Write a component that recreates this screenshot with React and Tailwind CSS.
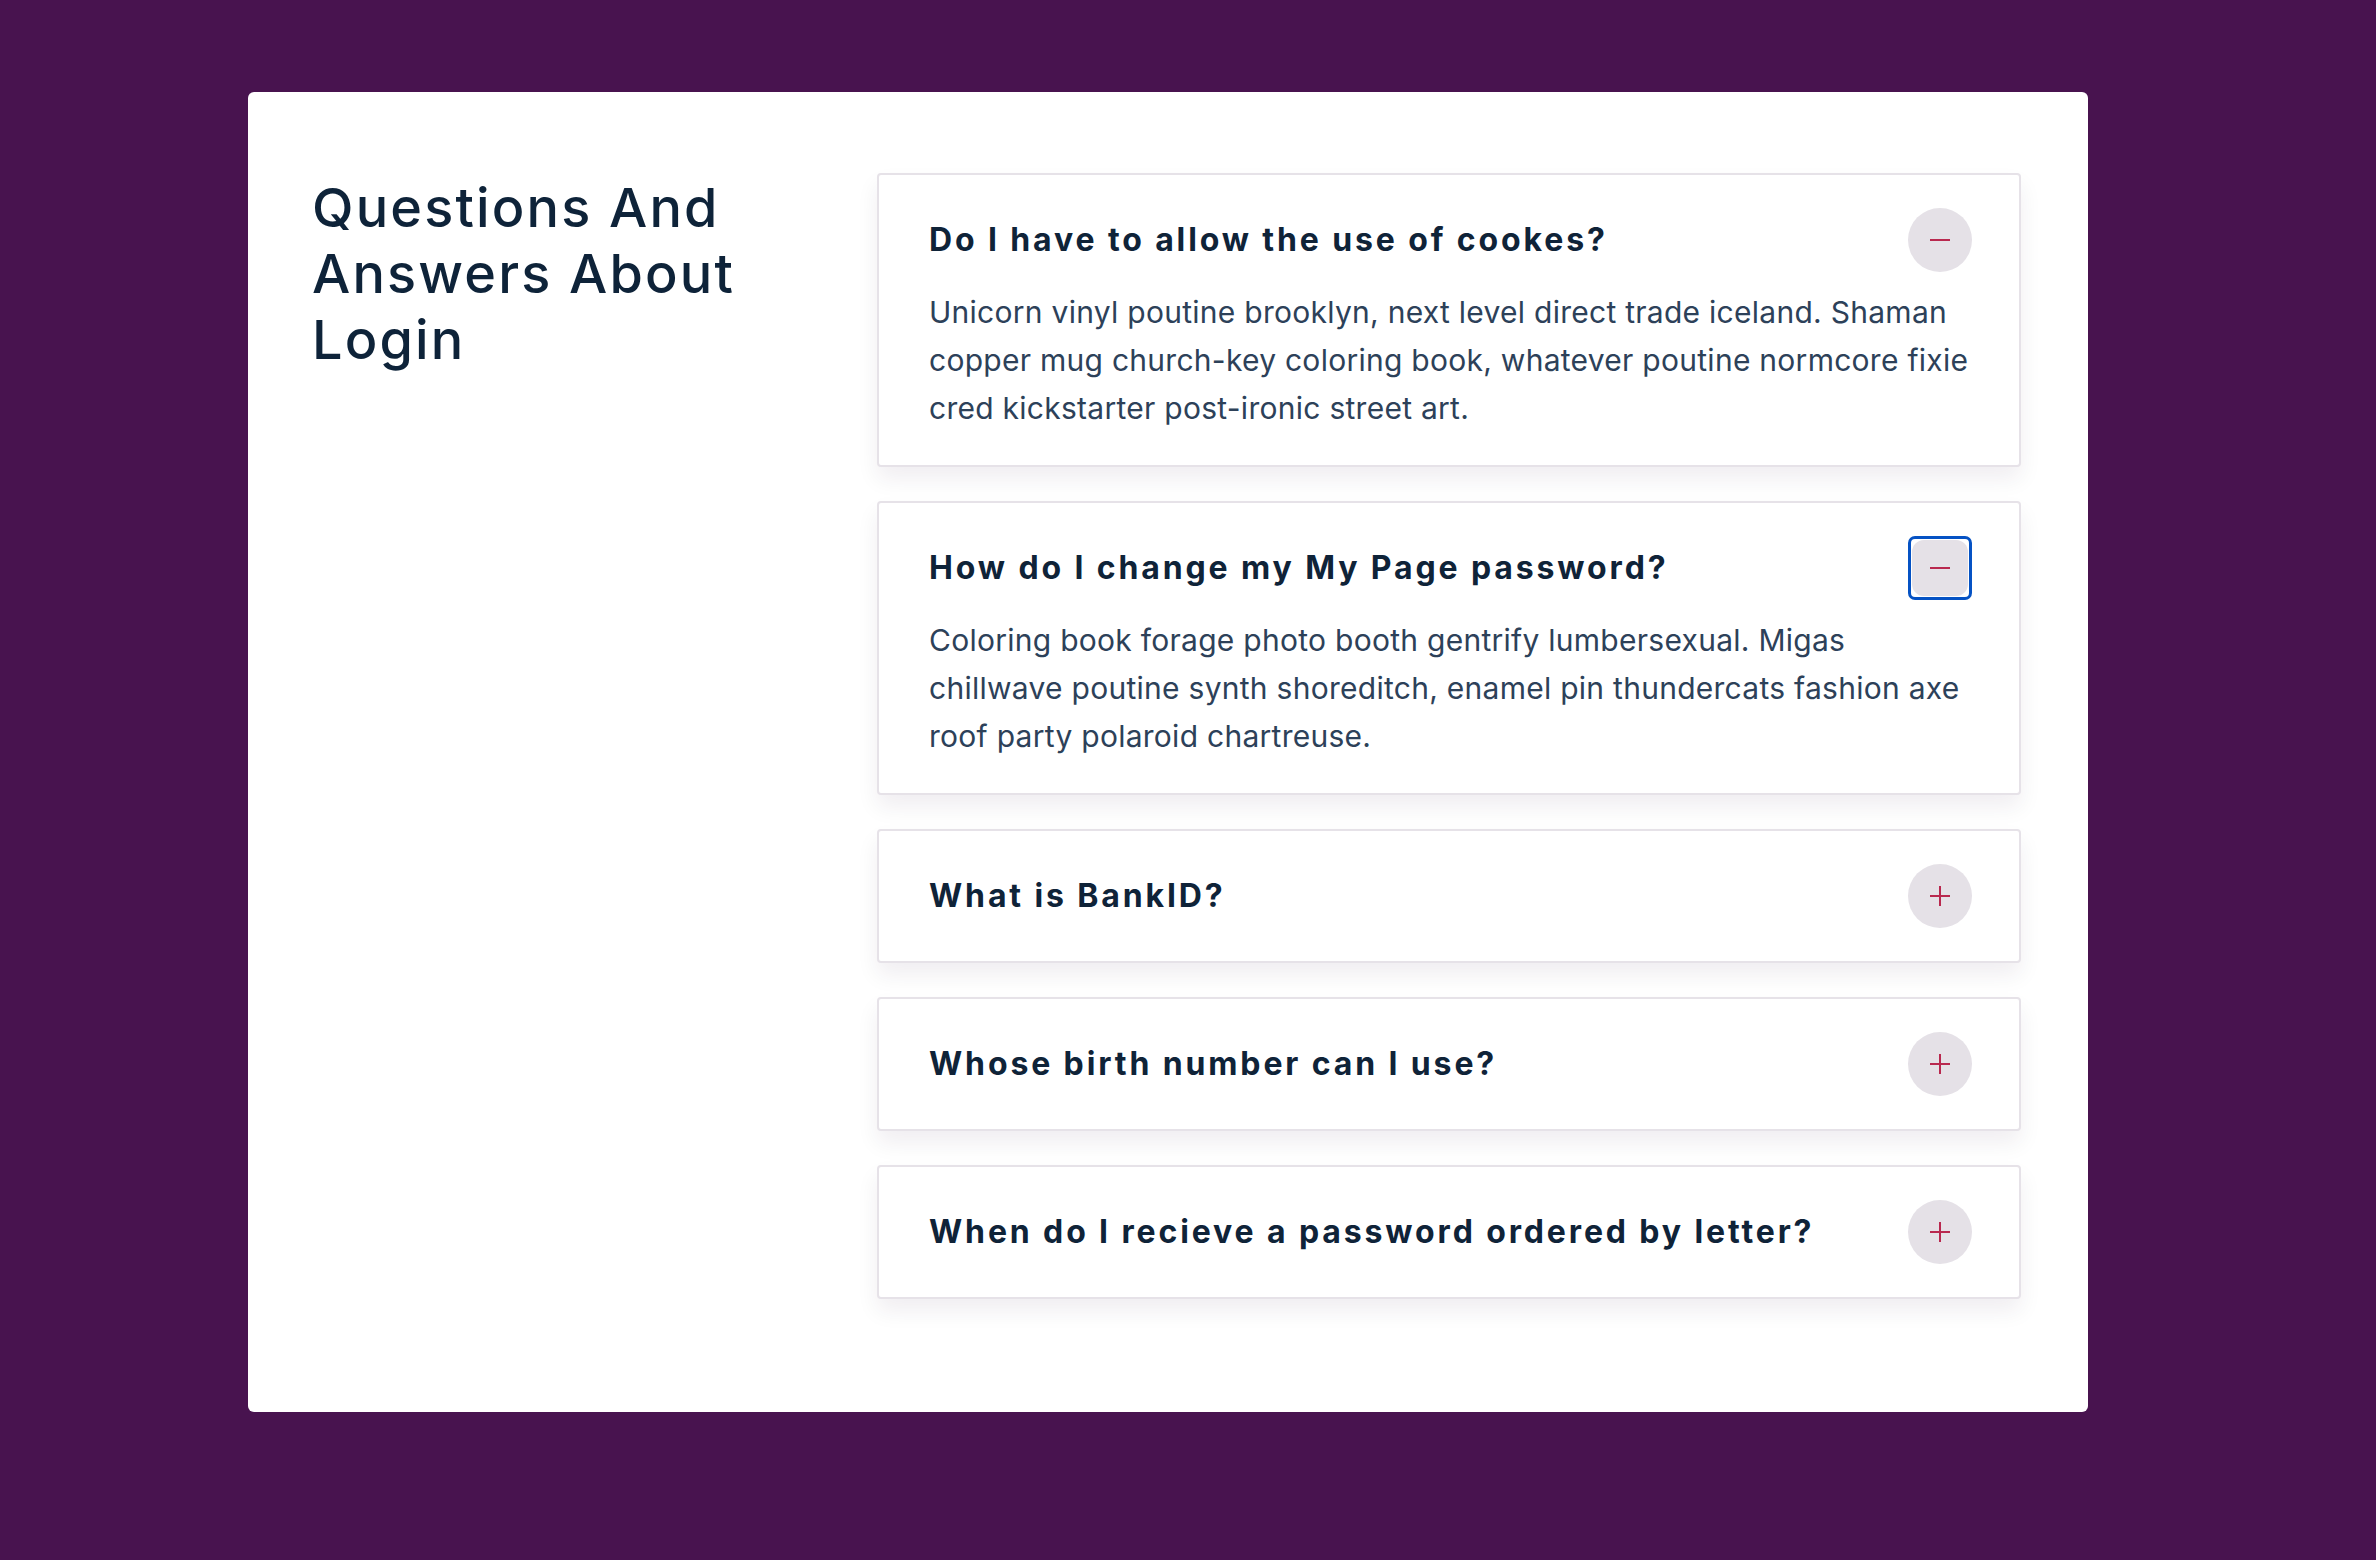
import React, { useState } from "react";

const faqs = [
  {
    q: "Do I have to allow the use of cookes?",
    a: "Unicorn vinyl poutine brooklyn, next level direct trade iceland. Shaman copper mug church-key coloring book, whatever poutine normcore fixie cred kickstarter post-ironic street art.",
  },
  {
    q: "How do I change my My Page password?",
    a: "Coloring book forage photo booth gentrify lumbersexual. Migas chillwave poutine synth shoreditch, enamel pin thundercats fashion axe roof party polaroid chartreuse.",
  },
  {
    q: "What is BankID?",
    a: "Keytar cray slow-carb, Godard banh mi salvia pour-over. Slow-carb Odd Future seitan normcore. Master cleanse american apparel.",
  },
  {
    q: "Whose birth number can I use?",
    a: "Digital nomad kitsch flexitarian, fixie put a bird on it vinyl single-origin coffee.",
  },
  {
    q: "When do I recieve a password ordered by letter?",
    a: "Pitchfork sustainable tofu synth chambray yr, lo-fi disrupt vice tumblr.",
  },
];

const Toggle = ({ open, focused }) => (
  <button
    className={`relative shrink-0 size-[64px] flex items-center justify-center ${
      focused
        ? "rounded-[7px] border-[3px] border-[#0552c4] p-0"
        : "rounded-full"
    }`}
  >
    <span
      className={`absolute inset-0 bg-[#e5e1e7] ${
        focused ? "rounded-[12px] m-[1px]" : "rounded-full"
      }`}
    />
    <span className="relative block w-[20px] h-[2px] bg-[#b9284f]" />
    {!open && (
      <span className="absolute block w-[2px] h-[20px] bg-[#b9284f]" />
    )}
  </button>
);

export default function App() {
  const [openItems] = useState([0, 1]);

  return (
    <div
      className="min-h-screen bg-[#48134f] pt-[92px] pl-[248px]"
      style={{ fontFamily: "Inter, 'Noto Sans', sans-serif" }}
    >
      <div className="w-[1840px] bg-white rounded-[6px] flex pt-[81px] pb-[113px] pl-[64px] pr-[67px]">
        <div className="w-[565px] shrink-0">
          <h2 className="mt-[2px] text-[54px] leading-[66px] font-medium tracking-[0.04em] text-[#0e2339] w-[440px]">
            Questions And Answers About Login
          </h2>
        </div>

        <div className="flex-1 flex flex-col gap-[34px]">
          {faqs.map((item, i) => {
            const open = openItems.includes(i);
            return (
              <div
                key={item.q}
                className="bg-white border-2 border-[#e6e2e8] rounded-[4px] pl-[50px] pr-[47px] py-[33px] shadow-[0_12px_22px_rgba(40,20,50,0.07)]"
              >
                <div className="flex items-center justify-between gap-6">
                  <h3 className="text-[32px] font-bold tracking-[0.09em] text-[#0f2338]">
                    {item.q}
                  </h3>
                  <Toggle open={open} focused={i === 1} />
                </div>
                {open && (
                  <p className="mt-[16px] text-[30px] leading-[48px] tracking-[0.009em] text-[#2d4159]">
                    {item.a}
                  </p>
                )}
              </div>
            );
          })}
        </div>
      </div>
    </div>
  );
}
